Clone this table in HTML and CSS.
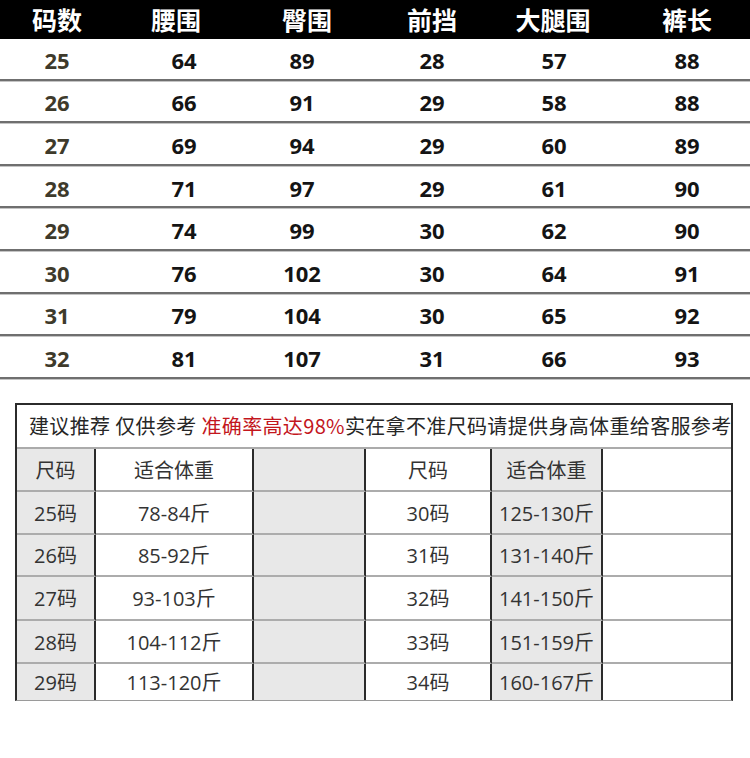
FILE: index.html
```html
<!DOCTYPE html>
<html lang="zh">
<head>
<meta charset="utf-8">
<title>尺码表</title>
<link rel="stylesheet" href="styles.css">
</head>
<body>
<div class="page">
  <div class="size-table">
    <div class="row head">
      <div>码数</div><div>腰围</div><div>臀围</div><div>前挡</div><div>大腿围</div><div>裤长</div>
    </div>
    <div class="row data"><div>25</div><div>64</div><div>89</div><div>28</div><div>57</div><div>88</div></div>
    <div class="row data"><div>26</div><div>66</div><div>91</div><div>29</div><div>58</div><div>88</div></div>
    <div class="row data"><div>27</div><div>69</div><div>94</div><div>29</div><div>60</div><div>89</div></div>
    <div class="row data"><div>28</div><div>71</div><div>97</div><div>29</div><div>61</div><div>90</div></div>
    <div class="row data"><div>29</div><div>74</div><div>99</div><div>30</div><div>62</div><div>90</div></div>
    <div class="row data"><div>30</div><div>76</div><div>102</div><div>30</div><div>64</div><div>91</div></div>
    <div class="row data"><div>31</div><div>79</div><div>104</div><div>30</div><div>65</div><div>92</div></div>
    <div class="row data"><div>32</div><div>81</div><div>107</div><div>31</div><div>66</div><div>93</div></div>
  </div>

  <div class="weight-box">
    <div class="note">建议推荐 仅供参考 <span class="red">准确率高达98%</span>实在拿不准尺码请提供身高体重给客服参考</div>
    <div class="wgrid">
      <div class="c g">尺码</div><div class="c">适合体重</div><div class="c g"></div><div class="c">尺码</div><div class="c g">适合体重</div><div class="c last"></div>
      <div class="c g">25码</div><div class="c">78-84斤</div><div class="c g"></div><div class="c">30码</div><div class="c g">125-130斤</div><div class="c last"></div>
      <div class="c g">26码</div><div class="c">85-92斤</div><div class="c g"></div><div class="c">31码</div><div class="c g">131-140斤</div><div class="c last"></div>
      <div class="c g">27码</div><div class="c">93-103斤</div><div class="c g"></div><div class="c">32码</div><div class="c g">141-150斤</div><div class="c last"></div>
      <div class="c g">28码</div><div class="c">104-112斤</div><div class="c g"></div><div class="c">33码</div><div class="c g">151-159斤</div><div class="c last"></div>
      <div class="c g">29码</div><div class="c">113-120斤</div><div class="c g"></div><div class="c">34码</div><div class="c g">160-167斤</div><div class="c last"></div>
    </div>
  </div>
</div>
</body>
</html>
```
FILE: styles.css
```css
html, body {
  margin: 0;
  padding: 0;
  background: #ffffff;
}
.page {
  width: 750px;
}
.size-table {
  display: flex;
  flex-direction: column;
}
.row {
  display: grid;
  grid-template-columns: repeat(6, 125px);
  align-items: center;
  text-align: center;
  box-sizing: border-box;
}
.head {
  height: 39px;
  background: #000;
  color: #fff;
  font-family: "Noto Sans CJK SC", sans-serif;
  font-weight: 700;
  font-size: 25px;
  line-height: 39px;
}
.head > :nth-child(1) { padding-right: 11px; }
.head > :nth-child(2) { padding-right: 23px; }
.head > :nth-child(3) { padding-right: 11px; }
.head > :nth-child(4) { padding-right: 11px; }
.head > :nth-child(5) { padding-right: 19px; }
.head > :nth-child(6) { padding-right: 1px; }
.data {
  height: 41.6px;
  border-bottom: 2px solid #6f6f6f;
  box-shadow: 0 1px 0 #c4c4c4;
  margin-bottom: 1px;
  font-family: "Open Sans", "Liberation Sans", sans-serif;
  font-weight: 700;
  font-size: 22px;
  line-height: 28px;
  color: #141414;
  padding-top: 2px;
}
.data > :nth-child(1) { padding-right: 11px; color: #3e3a2b; }
.data > :nth-child(2) { padding-right: 7px; }
.data > :nth-child(3) { padding-right: 21px; }
.data > :nth-child(4) { padding-right: 11px; }
.data > :nth-child(5) { padding-right: 17px; }
.data > :nth-child(6) { padding-right: 1px; }

.weight-box {
  margin: 23px 0 0 15px;
  width: 718px;
  box-sizing: border-box;
  border: 2px solid #2b2b2b;
  border-bottom: 1px solid #9a9a9a;
  font-family: "Noto Sans CJK SC", sans-serif;
  color: #333;
}
.note {
  height: 42px;
  line-height: 42px;
  padding-left: 12px;
  font-size: 20px;
  letter-spacing: 0.35px;
  color: #262626;
  white-space: nowrap;
  border-bottom: 2px solid #ababab;
}
.red {
  color: #c3161d;
}
.wgrid {
  display: grid;
  grid-template-columns: 79px 158px 112px 126px 111px 1fr;
  grid-template-rows: 43px 43px 42px 44px 43px 36px;
  font-family: "Open Sans", "Noto Sans CJK SC", sans-serif;
  font-size: 20px;
}
.c {
  display: flex;
  align-items: center;
  justify-content: center;
  border-right: 2px solid #2b2b2b;
  border-bottom: 2px solid #acacac;
  background: #fff;
}
.c.g {
  background: #e8e8e8;
}
.c.last {
  border-right: none;
}
.wgrid > :nth-last-child(-n+6) {
  border-bottom: none;
}
```
